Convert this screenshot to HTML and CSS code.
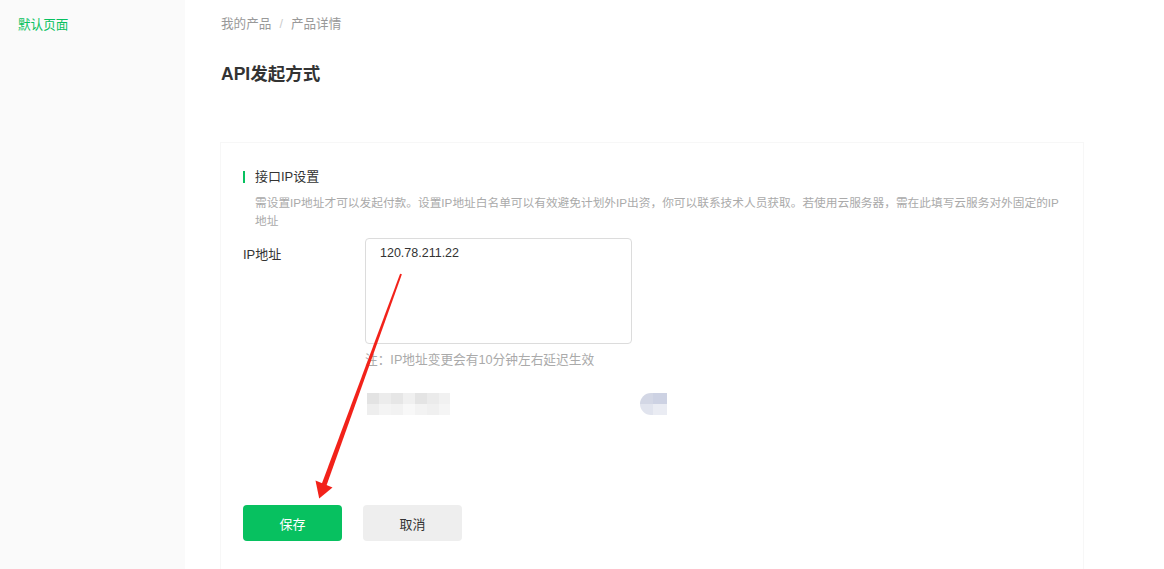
FILE: index.html
```html
<!DOCTYPE html>
<html lang="zh-CN">
<head>
<meta charset="utf-8">
<title>API发起方式</title>
<link rel="stylesheet" href="styles.css">
</head>
<body>
<div class="page">
  <aside class="sidebar">
    <div class="nav-item active">默认页面</div>
  </aside>
  <main class="main">
    <div class="breadcrumb">
      <span>我的产品</span><span class="sep">/</span><span>产品详情</span>
    </div>
    <h1 class="title">API发起方式</h1>
    <section class="card">
      <div class="section-title"><span class="bar"></span>接口IP设置</div>
      <p class="desc">需设置IP地址才可以发起付款。设置IP地址白名单可以有效避免计划外IP出资，你可以联系技术人员获取。若使用云服务器，需在此填写云服务对外固定的IP<br>地址</p>
      <div class="form-row">
        <label class="label">IP地址</label>
        <div class="field">
          <div class="textarea">120.78.211.22</div>
          <div class="note">注：IP地址变更会有10分钟左右延迟生效</div>
          <div class="blur-row">
            <div class="blur a">
              <i class="t1"></i><i class="t2"></i><i class="t3"></i><i class="t4"></i><i class="t5"></i><i class="t6"></i><i class="t7"></i>
              <i class="b1"></i><i class="b2"></i><i class="b3"></i><i class="b4"></i><i class="b5"></i><i class="b6"></i><i class="b7"></i>
            </div>
            <div class="blur b">
              <i class="c1"></i><i class="c2"></i><i class="d1"></i><i class="d2"></i>
            </div>
          </div>
        </div>
      </div>
      <div class="actions">
        <button class="btn primary">保存</button>
        <button class="btn default">取消</button>
      </div>
    </section>
  </main>
  <svg class="arrow" width="1164" height="569" viewBox="0 0 1164 569" aria-hidden="true">
    <polygon points="400.1,273.7 401.9,274.3 326.3,485.9 321.7,484.1" fill="#f2221a"/>
    <polygon points="315.5,480.5 332.5,487.5 319.2,498.5" fill="#f2221a"/>
  </svg>
</div>
</body>
</html>
```

FILE: styles.css
```css
* { box-sizing: border-box; }
html, body { margin: 0; padding: 0; }
body {
  font-family: "Liberation Sans", "Noto Sans CJK SC", sans-serif;
  color: #333;
  background: #fff;
}
.page {
  position: relative;
  display: flex;
  height: 569px;
  overflow: hidden;
}
.sidebar {
  width: 185px;
  flex: none;
  background: #fafafa;
  padding: 15px 18px;
}
.nav-item {
  font-size: 12.6px;
  line-height: 20px;
  color: #07c160;
}
.main {
  flex: 1;
  padding: 14px 80px 0 35px;
  display: flex;
  flex-direction: column;
}
.breadcrumb {
  font-size: 12.6px;
  line-height: 20px;
  color: #999;
  padding-left: 1px;
}
.breadcrumb .sep {
  color: #ccc;
  margin: 0 8px;
}
.title {
  margin: 28px 0 0 1px;
  font-size: 17.5px;
  line-height: 24px;
  font-weight: bold;
  color: #333;
}
.card {
  margin-top: 56px;
  border: 1px solid #f7f7f7;
  border-bottom: none;
  padding: 24px 22px 60px;
  flex: 1;
}
.section-title {
  display: flex;
  align-items: center;
  font-size: 13px;
  line-height: 20px;
  color: #333;
}
.bar {
  width: 2px;
  height: 12px;
  background: #07c160;
  margin-right: 10px;
}
.desc {
  margin: 7px 0 0 12px;
  font-size: 11.7px;
  line-height: 18px;
  color: #aaa;
}
.form-row {
  display: flex;
  margin-top: 8px;
}
.label {
  width: 122px;
  flex: none;
  font-size: 13px;
  line-height: 20px;
  margin-top: 7px;
  color: #333;
}
.field {
  display: flex;
  flex-direction: column;
}
.textarea {
  width: 267px;
  height: 106px;
  border: 1px solid #dcdcdc;
  border-radius: 4px;
  padding: 5px 14px;
  font-size: 12.5px;
  line-height: 18px;
  color: #333;
}
.note {
  margin-top: 6px;
  font-size: 12.7px;
  line-height: 20px;
  color: #aaa;
}
.blur-row {
  display: flex;
  margin-top: 23px;
  height: 22px;
}
.blur {
  display: grid;
  grid-auto-flow: row;
}
.blur i { display: block; }
.blur.a {
  margin-left: 2px;
  grid-template-columns: repeat(7, 12px);
  grid-template-rows: 11px 11px;
  width: 83px;
  overflow: hidden;
}
.t1 { background: #e3e3e3; }
.t2 { background: #ececec; }
.t3 { background: #e6e6e6; }
.t4 { background: #f0f0f0; }
.t5 { background: #e4e4e4; }
.t6 { background: #ebebeb; }
.t7 { background: #f1f1f1; }
.b1 { background: #eeeeee; }
.b2 { background: #f4f4f4; }
.b3 { background: #f2f2f2; }
.b4 { background: #f8f8f8; }
.b5 { background: #f3f3f3; }
.b6 { background: #f0f0f0; }
.b7 { background: #f5f5f5; }
.blur.b {
  margin-left: 190px;
  grid-template-columns: 13px 14px;
  grid-template-rows: 11px 11px;
  width: 27px;
  border-radius: 11px 0 0 11px;
  overflow: hidden;
}
.c1 { background: #d3d7e5; }
.c2 { background: #cdd2e3; }
.d1 { background: #e1e4ee; }
.d2 { background: #eaecf3; }
.actions {
  display: flex;
  gap: 21px;
  margin-top: 90px;
}
.btn {
  width: 99px;
  height: 36px;
  border: none;
  border-radius: 4px;
  font-family: "Liberation Sans", "Noto Sans CJK SC", sans-serif;
  font-size: 13px;
  cursor: pointer;
}
.btn.primary {
  background: #07c160;
  color: #fff;
}
.btn.default {
  background: #eeeeee;
  color: #333;
}
.arrow {
  position: absolute;
  left: 0;
  top: 0;
  pointer-events: none;
}
```
